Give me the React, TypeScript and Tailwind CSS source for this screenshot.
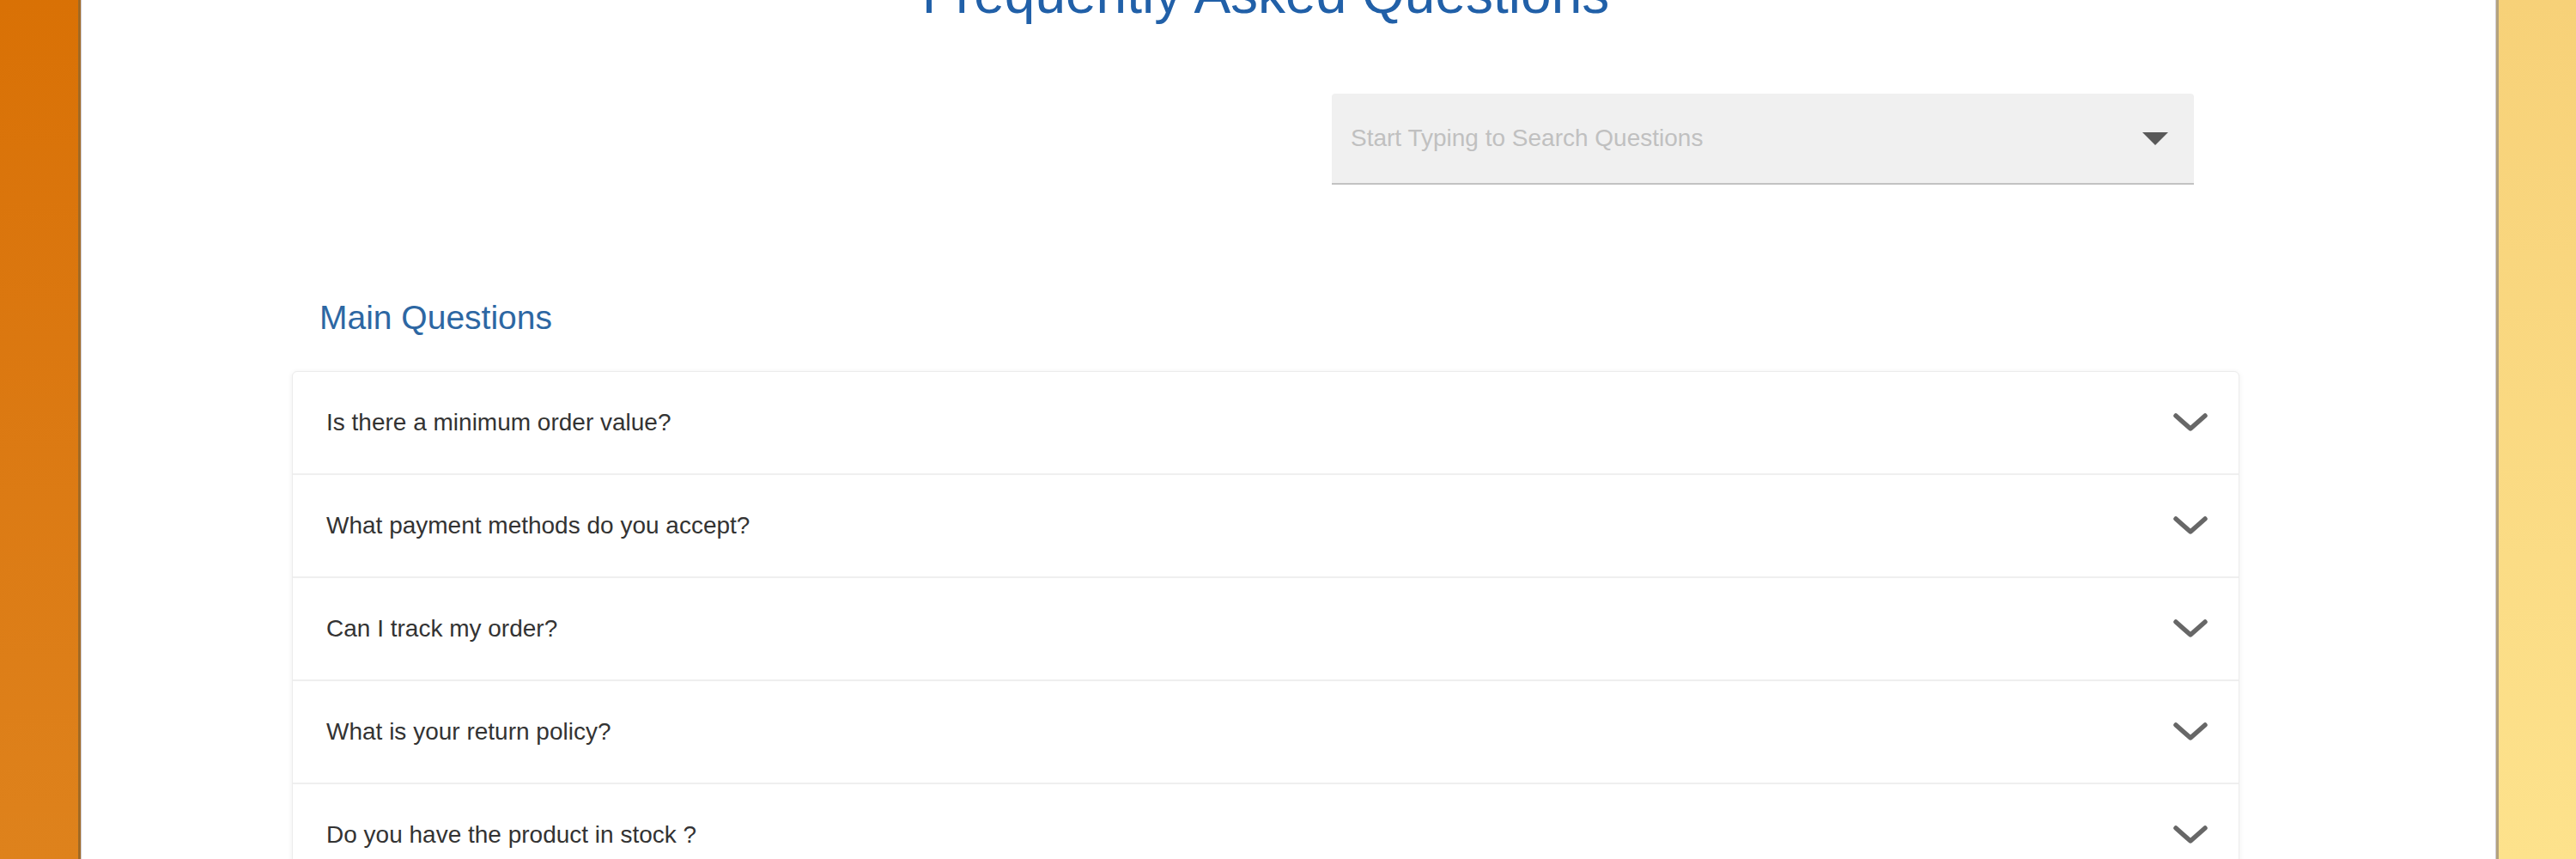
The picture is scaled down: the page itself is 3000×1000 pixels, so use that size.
import React from "react";

const questions = [
  "Is there a minimum order value?",
  "What payment methods do you accept?",
  "Can I track my order?",
  "What is your return policy?",
  "Do you have the product in stock ?",
];

function Chevron() {
  return (
    <svg width="42" height="26" viewBox="0 0 42 26" fill="none">
      <path
        d="M4 5 L21 20 L38 5"
        stroke="#676767"
        strokeWidth="5.5"
        strokeLinecap="round"
        strokeLinejoin="round"
      />
    </svg>
  );
}

export default function App() {
  return (
    <div
      className="flex h-[1000px] w-[3000px] overflow-hidden"
      style={{ fontFamily: '"Liberation Sans", Arial, sans-serif' }}
    >
      <div className="w-[91px] shrink-0 bg-gradient-to-b from-[#d97105] to-[#de821c]" />
      <div className="w-[3px] shrink-0 bg-[#a06a26]" />
      <div className="w-[1px] shrink-0 bg-[#cfcbd0]" />
      <div className="flex-1 bg-white overflow-hidden">
        <div className="ml-[245px] w-[2268px] flex flex-col">
          <h1 className="mt-[-39px] text-center text-[64px] leading-[64px] font-normal text-[#2160a8]">
            Frequently Asked Questions
          </h1>
          <div className="mt-[84px] flex justify-end pr-[53px]">
            <div className="w-[1004px] h-[106px] bg-[#f0f0f0] rounded-t-[4px] border-b-2 border-[#c2c2c2] flex items-center justify-between pl-[22px] pr-[30px]">
              <span className="text-[28px] text-[#c0c0c0]">Start Typing to Search Questions</span>
              <svg width="30" height="15" viewBox="0 0 30 15">
                <path d="M0 0 L30 0 L15 15 Z" fill="#595959" />
              </svg>
            </div>
          </div>
          <h2 className="mt-[135px] pl-[32px] text-[39px] leading-[39px] font-normal text-[#2d67a3]">
            Main Questions
          </h2>
          <div className="mt-[43px] rounded-[6px] border border-[#ececec] bg-white shadow-[0_1px_6px_rgba(0,0,0,0.07)] overflow-hidden">
            {questions.map((q) => (
              <div
                key={q}
                className="h-[120px] flex items-center justify-between pl-[39px] pr-[35px] border-b-2 border-[#efefef]"
              >
                <span className="text-[28px] text-[#333333]">{q}</span>
                <Chevron />
              </div>
            ))}
          </div>
        </div>
      </div>
      <div className="w-[1px] shrink-0 bg-[#d2cdd6]" />
      <div className="w-[3px] shrink-0 bg-[#b4a27c]" />
      <div className="w-[90px] shrink-0 bg-gradient-to-b from-[#f7d178] to-[#fde28c]" />
    </div>
  );
}
